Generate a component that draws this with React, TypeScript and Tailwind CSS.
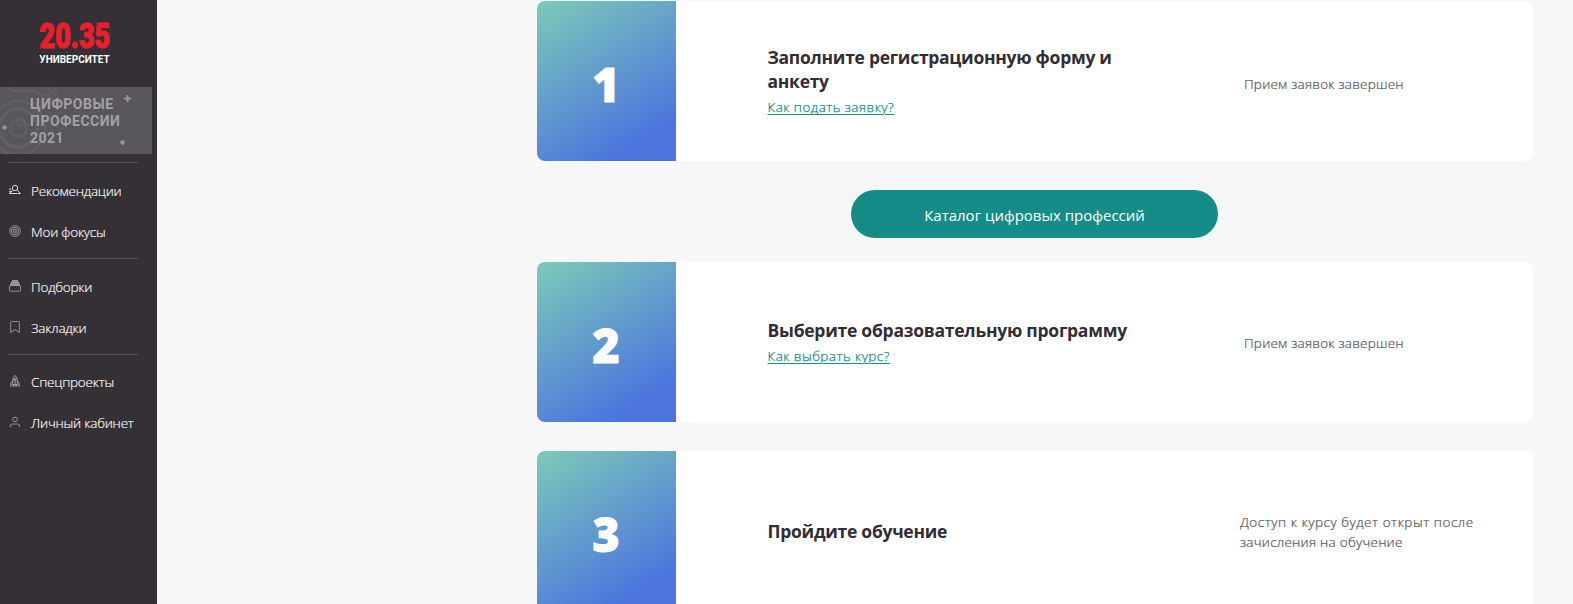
import type { ReactNode } from 'react';

const stroke = { fill: 'none', stroke: '#a5a2a8', strokeWidth: 0.85 };

function Icon({ children }: { children: ReactNode }) {
  return (
    <svg width="12" height="12" viewBox="0 0 12 12" className="mb-[2px] mr-[10px] shrink-0" {...stroke}>
      {children}
    </svg>
  );
}

const icons = {
  search: (
    <Icon>
      <g stroke="#d5d3d6" strokeWidth="1">
        <circle cx="6" cy="4" r="2.7" />
        <path d="M0 5h2.2M0 7.300h3M0 9.500h8.500M0.300 9.500L3.800 6.500M8 6L11.600 9.600M8.500 9.500h3" />
      </g>
    </Icon>
  ),
  focus: (
    <Icon>
      <circle cx="6" cy="6" r="5.4" />
      <circle cx="6" cy="6" r="3.7" />
      <circle cx="6" cy="6" r="2" />
      <circle cx="6" cy="6" r="0.5" />
    </Icon>
  ),
  stack: (
    <Icon>
      <path d="M3.500 0.500h5L11 5.500H1z" fill="#8f8c92" />
      <path d="M2.200 2.800h7.600M1 5.400h10M0.500 6v4.200q0 1 1 1h9q1 0 1-1V6" />
    </Icon>
  ),
  bookmark: (
    <Icon>
      <path d="M1.700 11.500V1.300q0-0.900 0.900-0.900h6.800q0.900 0 0.900 0.900v10.200L6 8.500z" />
    </Icon>
  ),
  rocket: (
    <Icon>
      <g strokeWidth="1">
        <path d="M6 0.400Q3.700 2.500 3.700 5v4.500h4.600V5Q8.300 2.500 6 0.400zM3.700 6L1.800 8v3.500l2.200-2M8.300 6l1.900 2v3.500L8 9.500M4 3.800h4M6 6v5.800M4.700 9.700v2M7.300 9.700v2" />
        <circle cx="6" cy="5" r="0.800" />
      </g>
    </Icon>
  ),
  user: (
    <Icon>
      <circle cx="6" cy="3.4" r="2.3" />
      <path d="M1.300 11.200V10q0-2 2.200-2h5q2.200 0 2.200 2v1.200" />
    </Icon>
  ),
};

function Item({ icon, label }: { icon: keyof typeof icons; label: string }) {
  return (
    <a className="flex h-[41px] items-center pl-[9px]">
      {icons[icon]}
      <span className="whitespace-nowrap text-[13.5px] font-light leading-5 tracking-[-0.21px] text-white [-webkit-text-stroke:0.15px_white]">{label}</span>
    </a>
  );
}

const Divider = () => <div className="ml-2 h-px w-[130px] shrink-0 bg-[#54524f]" />;

function Banner() {
  return (
    <div className="relative mt-[24px] h-[67px] w-[152px] shrink-0 overflow-hidden bg-[#59565c]">
      <svg width="152" height="67" className="absolute inset-0" fill="none" stroke="#626066" strokeWidth="2">
        <circle cx="18" cy="41" r="8.5" />
        <circle cx="21" cy="35" r="4" />
        <circle cx="18" cy="41" r="19" strokeWidth="3" />
        <circle cx="18" cy="41" r="27" strokeWidth="2" />
        <path d="M8 0l4 4h22l8 5 6-2 8 12M47 0l10 9M52 0l6 5" />
        <g stroke="#96949a">
          <path d="M127.500 8v7M124 11.500h7M4.500 38v5M2 40.500h5M122.500 53v5M120 55.500h5" />
        </g>
      </svg>
      <div className="relative pl-[30px] pt-[9px] font-['Roboto'] text-[14px] font-bold leading-[17px] tracking-[0.5px] text-[#a3a1a6]">
        <div>ЦИФРОВЫЕ</div>
        <div>ПРОФЕССИИ</div>
        <div>2021</div>
      </div>
    </div>
  );
}

function Card({ n, children, status, className }: { n: number; children: ReactNode; status: ReactNode; className: string }) {
  return (
    <section className={`flex h-[160px] w-[996px] shrink-0 overflow-hidden rounded-lg bg-white ${className}`}>
      <div className="flex w-[139px] items-center justify-center bg-[linear-gradient(148deg,#7ac7ba_3%,#4b74de_84%)] pr-[1px] pt-[6px] text-[47px] font-extrabold leading-none text-white [-webkit-text-stroke:0.8px_white]">
        {n}
      </div>
      <div className="flex w-[472px] flex-col justify-center pl-[91.5px] pt-[2px] text-[17.5px] font-bold leading-6 text-[#322d35]">{children}</div>
      <div className="flex flex-col justify-center whitespace-nowrap text-[13.5px] font-light leading-5 text-[#55525a] [-webkit-text-stroke:0.2px_#55525a]">{status}</div>
    </section>
  );
}

function Help({ children }: { children: ReactNode }) {
  return (
    <a className="mt-0.5 self-start whitespace-nowrap text-[13.5px] font-light leading-6 tracking-[0.45px] text-[#158c87] underline decoration-1 underline-offset-[2px] [-webkit-text-stroke:0.25px_#158c87]">
      {children}
    </a>
  );
}

export default function App() {
  return (
    <div className="flex h-[604px] overflow-hidden bg-[#f7f7f7] font-['Open_Sans','Noto_Sans',sans-serif]">
      <aside className="flex w-[157px] shrink-0 flex-col bg-[#352f36]">
        <div className="flex h-[63px] shrink-0 flex-col items-center pr-[8px] pt-[23px] font-['Roboto']">
          <div className="h-[31px] shrink-0 origin-center scale-x-[0.77] text-[35px] font-black leading-[27px] text-[#e9202a] [-webkit-text-stroke:1.2px_#e9202a]">20.35</div>
          <div className="text-[10px] font-bold leading-[12px] text-white">УНИВЕРСИТЕТ</div>
        </div>
        <Banner />
        <div className="h-2 shrink-0" />
        <Divider />
        <nav className="pb-[6px] pt-[7px]">
          <Item icon="search" label="Рекомендации" />
          <Item icon="focus" label="Мои фокусы" />
        </nav>
        <Divider />
        <nav className="pb-[6px] pt-[7px]">
          <Item icon="stack" label="Подборки" />
          <Item icon="bookmark" label="Закладки" />
        </nav>
        <Divider />
        <nav className="pt-[6px]">
          <Item icon="rocket" label="Спецпроекты" />
          <Item icon="user" label="Личный кабинет" />
        </nav>
      </aside>
      <main className="flex flex-col pl-[380px] pt-px">
        <Card n={1} className="" status={<p className="pl-[96px] pt-[5px] tracking-[0.23px]">Прием заявок завершен</p>}>
          <h2 className="tracking-[-0.28px]">
            Заполните регистрационную форму и
            <br />
            анкету
          </h2>
          <Help>Как подать заявку?</Help>
        </Card>
        <button className="ml-[314px] mt-[29px] h-12 w-[367px] shrink-0 rounded-full bg-[#158c87] pt-[2px] text-[15px] text-white">
          Каталог цифровых профессий
        </button>
        <Card n={2} className="mt-6" status={<p className="pl-[96px] pt-[2px] tracking-[0.23px]">Прием заявок завершен</p>}>
          <h2 className="tracking-[-0.25px]">Выберите образовательную программу</h2>
          <Help>Как выбрать курс?</Help>
        </Card>
        <Card
          n={3}
          className="mt-[29px]"
          status={
            <p className="pl-[92px] pt-[1px]">
              <span className="tracking-[0.53px]">Доступ к курсу будет открыт после</span>
              <br />
              <span className="tracking-[0.25px]">зачисления на обучение</span>
            </p>
          }
        >
          <h2 className="-mt-0.5 tracking-[-0.28px]">Пройдите обучение</h2>
        </Card>
      </main>
    </div>
  );
}
